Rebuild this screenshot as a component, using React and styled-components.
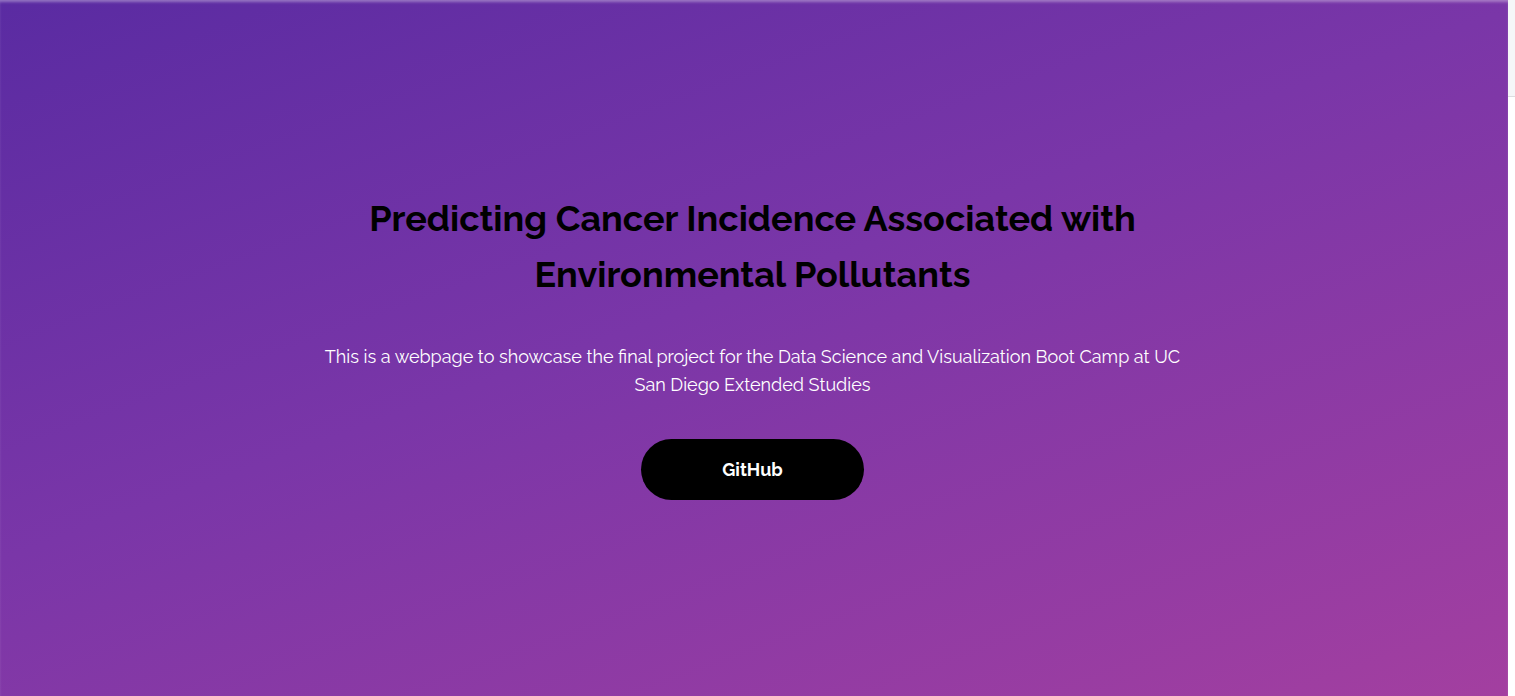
import React from 'react';
import styled, { createGlobalStyle } from 'styled-components';

const GlobalStyle = createGlobalStyle`
  html, body {
    margin: 0;
    padding: 0;
    height: 100%;
    overflow: hidden;
    background: #ffffff;
  }
  #root {
    height: 100%;
  }
`;

const Page = styled.div`
  display: flex;
  flex-direction: row;
  width: 100%;
  height: 696px;
`;

const Hero = styled.section`
  flex: 1;
  display: flex;
  flex-direction: column;
  align-items: center;
  padding: 190px 3px 0 0;
  background: linear-gradient(160deg, #5a2ba2 0%, #7a36a8 45%, #a33fa0 100%);
  box-shadow: inset 0 3px 3px -1px rgba(255, 255, 255, 0.35);
  font-family: 'Raleway', 'Lato', 'Noto Sans', sans-serif;
`;

const Content = styled.div`
  width: 880px;
  display: flex;
  flex-direction: column;
  align-items: center;
  text-align: center;
`;

const Title = styled.h1`
  margin: 0;
  font-size: 36px;
  line-height: 56px;
  font-weight: 700;
  color: #000;
  max-width: 800px;
`;

const Lead = styled.p`
  margin: 41px 0 0;
  font-size: 18px;
  line-height: 28px;
  color: #fff;
  font-weight: 400;
`;

const Button = styled.a`
  margin-top: 40px;
  width: 223px;
  height: 61px;
  border-radius: 31px;
  background: #000;
  color: #fff;
  display: flex;
  align-items: center;
  justify-content: center;
  font-size: 18px;
  font-weight: 700;
  text-decoration: none;
`;

const SideStrip = styled.div`
  width: 7px;
  display: flex;
  flex-direction: column;
`;

const StripTop = styled.div`
  height: 96px;
  background: #f5f6f8;
  border-bottom: 1px solid #dcdde0;
`;

export default function App() {
  return (
    <>
      <GlobalStyle />
      <Page>
        <Hero>
          <Content>
            <Title>Predicting Cancer Incidence Associated with Environmental Pollutants</Title>
            <Lead>
              This is a webpage to showcase the final project for the Data Science and Visualization Boot Camp at UC
              San Diego Extended Studies
            </Lead>
            <Button href="#">GitHub</Button>
          </Content>
        </Hero>
        <SideStrip>
          <StripTop />
        </SideStrip>
      </Page>
    </>
  );
}
